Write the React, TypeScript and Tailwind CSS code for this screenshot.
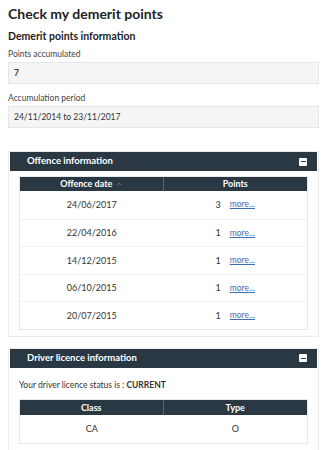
import { Minus, ChevronUp } from "lucide-react"

const offences = [
  { date: "24/06/2017", points: 3 },
  { date: "22/04/2016", points: 1 },
  { date: "14/12/2015", points: 1 },
  { date: "06/10/2015", points: 1 },
  { date: "20/07/2015", points: 1 },
]

function PanelHeader({ title }: { title: string }) {
  return (
    <div className="flex h-[19px] items-center justify-between bg-[#2a3843] pl-[17px] pr-[10px]">
      <span className="text-[9.5px] font-bold text-white">{title}</span>
      <span className="flex h-[8px] w-[8px] items-center justify-center rounded-[1px] bg-white">
        <Minus className="h-[7px] w-[7px] text-[#2a3843]" strokeWidth={4} />
      </span>
    </div>
  )
}

function Field({ label, value, bold }: { label: string; value: string; bold?: boolean }) {
  return (
    <div>
      <div className="text-[8.5px] leading-[12px] text-[#444]">{label}</div>
      <div
        className={`mt-[2px] flex h-[22px] items-center border border-[#e6e6e6] bg-[#f5f5f5] px-[5px] text-[8.5px] text-[#333] ${bold ? "font-bold" : ""}`}
      >
        {value}
      </div>
    </div>
  )
}

export default function App() {
  return (
    <div className="min-h-[450px] bg-white px-[8px] pt-[6px] text-[#333]" style={{ fontFamily: "Lato, 'Open Sans', sans-serif" }}>
      <h1 className="text-[14px] font-bold leading-[16px] text-[#222]">Check my demerit points</h1>
      <h2 className="mt-[7px] text-[10.5px] font-bold leading-[14px] text-[#222]">Demerit points information</h2>

      <div className="mt-[5px]">
        <Field label="Points accumulated" value="7" bold />
      </div>
      <div className="mt-[8px]">
        <Field label="Accumulation period" value="24/11/2014 to 23/11/2017" />
      </div>

      <div className="mt-[23px] border border-[#ececec] px-[1px] pb-[6px]">
        <PanelHeader title="Offence information" />
        <div className="mx-[9px] mt-[5px] border border-[#e8e8e8]">
          <div className="grid h-[14px] grid-cols-2 bg-[#2a3843] text-[9px] font-bold text-white">
            <div className="flex items-center justify-center gap-[4px] border-r border-[#55626c]">
              Offence date
              <ChevronUp className="h-[6px] w-[6px] text-[#8a96a0]" strokeWidth={3} />
            </div>
            <div className="flex items-center justify-center">Points</div>
          </div>
          {offences.map((o, i) => (
            <div
              key={o.date}
              className={`grid h-[27.6px] grid-cols-2 text-[9px] ${i > 0 ? "border-t border-[#f0f0f0]" : ""}`}
            >
              <div className="flex items-center justify-center">{o.date}</div>
              <div className="flex items-center justify-center gap-[9px]">
                <span>{o.points}</span>
                <span className="text-[8.5px] text-[#3f6db0] underline">more...</span>
              </div>
            </div>
          ))}
        </div>
      </div>

      <div className="mt-[11px] border border-[#ececec] px-[1px] pb-[6px]">
        <PanelHeader title="Driver licence information" />
        <div className="mx-[9px]">
          <div className="mt-[11px] text-[8.5px] leading-[12px]">
            Your driver licence status is : <span className="font-bold">CURRENT</span>
          </div>
          <div className="mt-[8px] border border-[#e8e8e8]">
            <div className="grid h-[15px] grid-cols-2 bg-[#2a3843] text-[9px] font-bold text-white">
              <div className="flex items-center justify-center border-r border-[#55626c]">Class</div>
              <div className="flex items-center justify-center">Type</div>
            </div>
            <div className="grid h-[28px] grid-cols-2 text-[9px]">
              <div className="flex items-center justify-center">CA</div>
              <div className="flex items-center justify-center">O</div>
            </div>
          </div>
        </div>
      </div>
    </div>
  )
}
